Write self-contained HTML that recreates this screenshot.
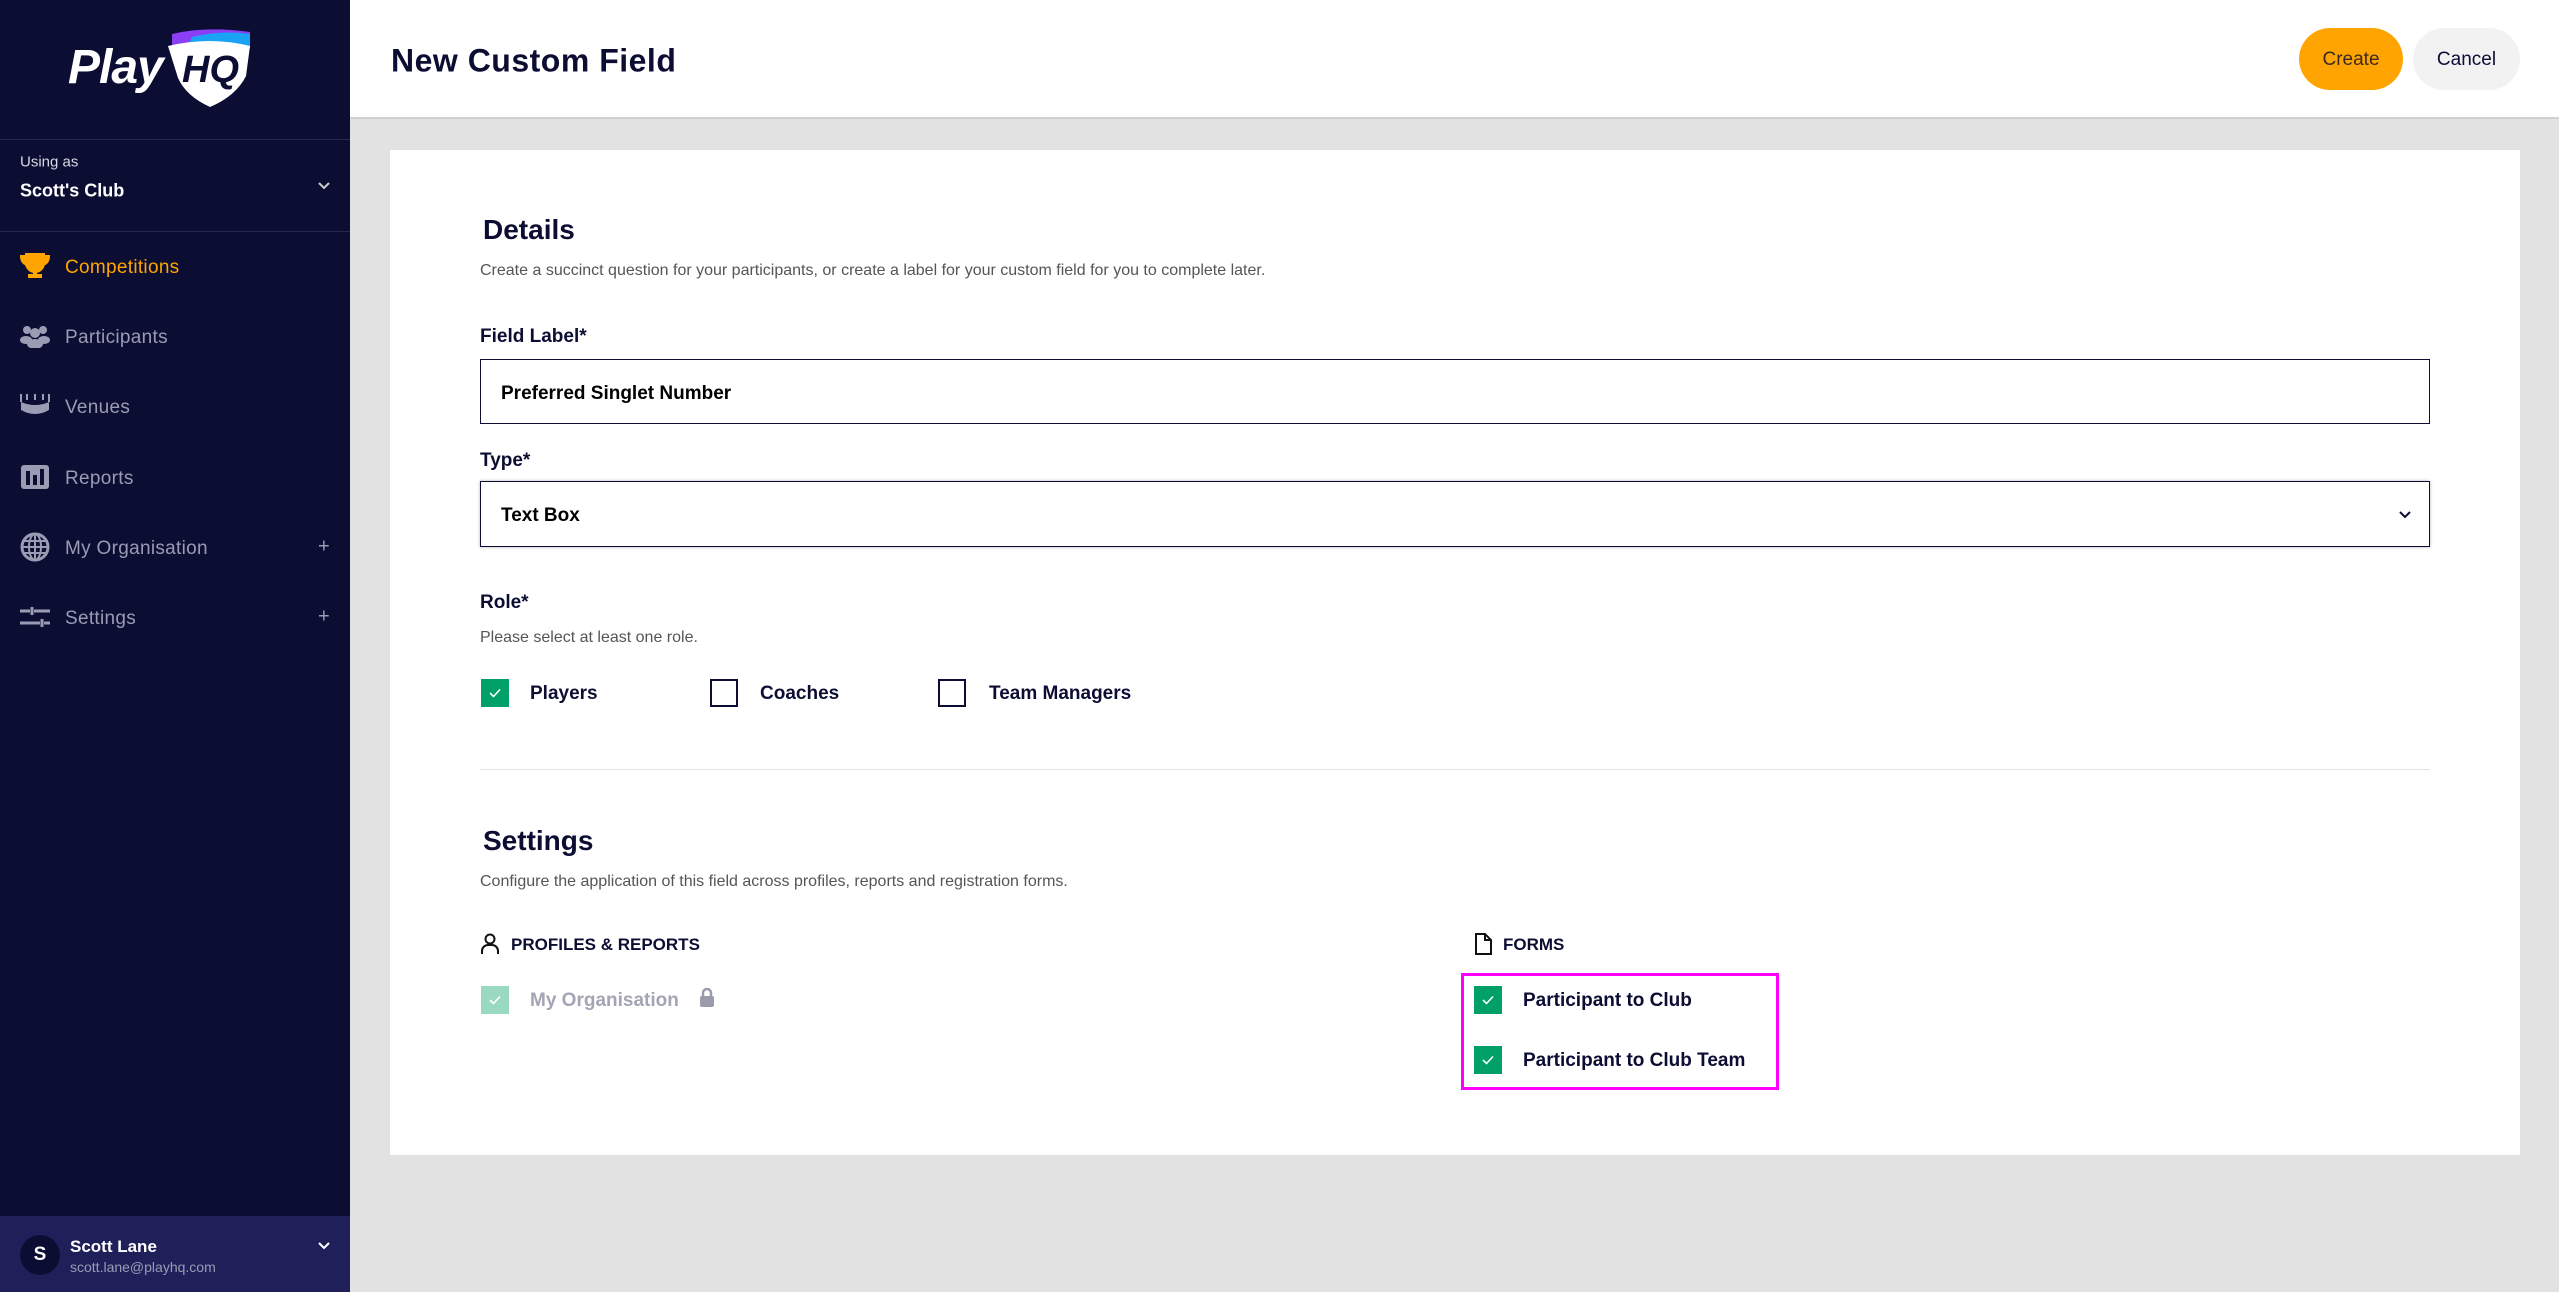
<!DOCTYPE html>
<html><head><meta charset="utf-8"><style>
*{box-sizing:border-box;margin:0;padding:0}
body{width:2559px;height:1292px;overflow:hidden;background:#e2e2e2;font-family:"Liberation Sans",sans-serif;color:#0b0d33;position:relative}
.a{position:absolute}
.sb{left:0;top:0;width:350px;height:1292px;background:#0b0d33}
.nav{left:65px;font-size:19px;color:#9a9cb4;transform:translateY(calc(-50% + 2px));letter-spacing:.3px}
.ic{left:20px;transform:translateY(-50%)}
.plus{left:318px;font-size:20px;color:#9a9cb4;transform:translateY(-50%)}
.t{transform:translateY(calc(-50% + 2px));white-space:nowrap}
.cb{width:28px;height:28px;border:2px solid #0b0d33;background:#fff}
.cbg{width:28px;height:28px;background:#00a067}
.cbg svg{position:absolute;left:8px;top:9px}
</style></head><body>
<div class="a sb"></div>
<!-- logo -->
<div class="a" style="left:68px;top:38px;font-size:48px;line-height:60px;font-weight:bold;font-style:italic;color:#fff;letter-spacing:-1px">Play</div>
<svg class="a" style="left:166px;top:26px" width="86" height="82" viewBox="0 0 86 82">
<path d="M6 8 Q40 0 84 6 L84 20 Q50 12 6 20Z" fill="#8b3ff5"/>
<path d="M26 11 Q56 4 84 8 L84 22 Q54 16 20 24Z" fill="#1aa3f5"/>
<path d="M2 20 Q44 10 84 20 L80 50 Q70 70 44 81 Q20 70 12 52Z" fill="#fff"/>
<text x="16" y="56" font-family="Liberation Sans" font-weight="bold" font-style="italic" font-size="38" fill="#0b0d33">HQ</text>
</svg>
<div class="a" style="left:0;top:139px;width:350px;height:1px;background:#25284d"></div>
<div class="a t" style="left:20px;top:160px;font-size:15px;color:#d8d8e4">Using as</div>
<div class="a t" style="left:20px;top:189px;font-size:18px;font-weight:bold;color:#fff">Scott's Club</div>
<svg class="a" style="left:318px;top:182px" width="12" height="8"><path d="M1 1l5 5 5-5" stroke="#ccc" stroke-width="2" fill="none"/></svg>
<div class="a" style="left:0;top:231px;width:350px;height:1px;background:#25284d"></div>
<!-- nav -->
<svg class="a ic" style="top:266px" width="30" height="26" viewBox="0 0 30 26"><path d="M6 1h18v9a9 9 0 0 1-18 0z M6 3H1q0 7 6 9 M24 3h5q0 7-6 9" fill="#ffa400" stroke="#ffa400" stroke-width="2"/><rect x="13" y="17" width="4" height="5" fill="#ffa400"/><rect x="8" y="21" width="14" height="4" fill="#ffa400"/></svg>
<div class="a nav" style="top:266px;color:#ffa400">Competitions</div>
<svg class="a ic" style="top:336px" width="30" height="24" viewBox="0 0 30 24"><circle cx="7" cy="6" r="4" fill="#9a9cb4"/><circle cx="23" cy="6" r="4" fill="#9a9cb4"/><circle cx="15" cy="9" r="5" fill="#9a9cb4"/><ellipse cx="6" cy="16" rx="6" ry="4" fill="#9a9cb4"/><ellipse cx="24" cy="16" rx="6" ry="4" fill="#9a9cb4"/><ellipse cx="15" cy="20" rx="8" ry="5" fill="#9a9cb4"/></svg>
<div class="a nav" style="top:336px">Participants</div>
<svg class="a ic" style="top:406px" width="30" height="24" viewBox="0 0 30 24"><path d="M1 0v8M7 0v6M15 0v6M23 0v6M29 0v8" stroke="#9a9cb4" stroke-width="2"/><path d="M1 8q14 6 28 0v8q-14 8-28 0z" fill="#9a9cb4"/></svg>
<div class="a nav" style="top:406px">Venues</div>
<svg class="a ic" style="top:477px" width="30" height="26" viewBox="0 0 30 26"><rect x="1" y="1" width="28" height="24" rx="3" fill="#9a9cb4"/><rect x="6" y="7" width="4" height="14" fill="#0b0d33"/><rect x="13" y="11" width="4" height="10" fill="#0b0d33"/><rect x="20" y="5" width="4" height="16" fill="#0b0d33"/></svg>
<div class="a nav" style="top:477px">Reports</div>
<svg class="a ic" style="top:547px" width="30" height="30" viewBox="0 0 30 30"><circle cx="15" cy="15" r="13" fill="none" stroke="#9a9cb4" stroke-width="3"/><ellipse cx="15" cy="15" rx="6" ry="13" fill="none" stroke="#9a9cb4" stroke-width="2"/><path d="M2 15h26M4 9h22M4 21h22M15 2v26" stroke="#9a9cb4" stroke-width="2"/></svg>
<div class="a nav" style="top:547px">My Organisation</div>
<div class="a plus" style="top:547px">+</div>
<svg class="a ic" style="top:617px" width="30" height="20" viewBox="0 0 30 20"><path d="M0 4h10M14 4h16M0 16h20M24 16h6" stroke="#9a9cb4" stroke-width="3"/><path d="M12 0v8M22 12v8" stroke="#9a9cb4" stroke-width="3"/></svg>
<div class="a nav" style="top:617px">Settings</div>
<div class="a plus" style="top:617px">+</div>
<!-- user -->
<div class="a" style="left:0;top:1216px;width:350px;height:76px;background:#1f2059"></div>
<div class="a" style="left:20px;top:1235px;width:40px;height:40px;border-radius:50%;background:#0b0d33;color:#fff;font-weight:bold;font-size:19px;text-align:center;line-height:40px">S</div>
<div class="a t" style="left:70px;top:1245px;font-size:17px;font-weight:bold;color:#fff">Scott Lane</div>
<div class="a t" style="left:70px;top:1265px;font-size:14px;color:#9a9cb4">scott.lane@playhq.com</div>
<svg class="a" style="left:318px;top:1242px" width="12" height="8"><path d="M1 1l5 5 5-5" stroke="#fff" stroke-width="2" fill="none"/></svg>
<!-- header -->
<div class="a" style="left:350px;top:0;width:2209px;height:119px;background:#fff;border-bottom:2px solid #d0d0d0"></div>
<div class="a t" style="left:391px;top:59px;font-size:32px;font-weight:bold;letter-spacing:.5px">New Custom Field</div>
<div class="a" style="left:2299px;top:28px;width:104px;height:62px;border-radius:31px;background:#ffa400;font-size:19px;text-align:center;line-height:64px;color:#3a2a20">Create</div>
<div class="a" style="left:2413px;top:28px;width:107px;height:62px;border-radius:31px;background:#f2f2f2;font-size:19px;text-align:center;line-height:64px">Cancel</div>
<!-- card -->
<div class="a" style="left:390px;top:150px;width:2130px;height:1005px;background:#fff"></div>
<div class="a t" style="left:483px;top:228px;font-size:28px;font-weight:bold">Details</div>
<div class="a t" style="left:480px;top:269px;font-size:16px;color:#555">Create a succinct question for your participants, or create a label for your custom field for you to complete later.</div>
<div class="a t" style="left:480px;top:335px;font-size:19px;font-weight:bold">Field Label*</div>
<div class="a" style="left:480px;top:359px;width:1950px;height:65px;border:1.5px solid #0b0d33"></div>
<div class="a t" style="left:501px;top:392px;font-size:19px;font-weight:bold;color:#000">Preferred Singlet Number</div>
<div class="a t" style="left:480px;top:459px;font-size:19px;font-weight:bold">Type*</div>
<div class="a" style="left:480px;top:481px;width:1950px;height:66px;border:1.5px solid #0b0d33;box-shadow:0 0 3px rgba(0,0,0,.3)"></div>
<div class="a t" style="left:501px;top:514px;font-size:19px;font-weight:bold;color:#000">Text Box</div>
<svg class="a" style="left:2399px;top:511px" width="12" height="8"><path d="M1 1l5 5 5-5" stroke="#0b0d33" stroke-width="2" fill="none"/></svg>
<div class="a t" style="left:480px;top:601px;font-size:19px;font-weight:bold">Role*</div>
<div class="a t" style="left:480px;top:636px;font-size:16px;color:#555">Please select at least one role.</div>
<div class="a cbg" style="left:481px;top:679px"><svg width="12" height="10"><path d="M1 5l3.5 3.5L11 1.5" stroke="#fff" stroke-width="1.6" fill="none"/></svg></div>
<div class="a t" style="left:530px;top:692px;font-size:19px;font-weight:bold">Players</div>
<div class="a cb" style="left:710px;top:679px"></div>
<div class="a t" style="left:760px;top:692px;font-size:19px;font-weight:bold">Coaches</div>
<div class="a cb" style="left:938px;top:679px"></div>
<div class="a t" style="left:989px;top:692px;font-size:19px;font-weight:bold">Team Managers</div>
<div class="a" style="left:480px;top:769px;width:1950px;height:1px;background:#e2e2e2"></div>
<div class="a t" style="left:483px;top:839px;font-size:28px;font-weight:bold">Settings</div>
<div class="a t" style="left:480px;top:880px;font-size:16px;color:#555">Configure the application of this field across profiles, reports and registration forms.</div>
<svg class="a" style="left:480px;top:933px" width="20" height="22" viewBox="0 0 20 22"><circle cx="10" cy="6" r="4.5" fill="none" stroke="#111" stroke-width="2"/><path d="M2 21v-3a6 6 0 0 1 6-6h4a6 6 0 0 1 6 6v3" fill="none" stroke="#111" stroke-width="2"/></svg>
<div class="a t" style="left:511px;top:943px;font-size:17px;font-weight:bold">PROFILES &amp; REPORTS</div>
<div class="a cbg" style="left:481px;top:986px;background:#98d9bf"><svg width="12" height="10"><path d="M1 5l3.5 3.5L11 1.5" stroke="#fff" stroke-width="1.6" fill="none"/></svg></div>
<div class="a t" style="left:530px;top:999px;font-size:19px;font-weight:bold;color:#a3a4b4">My Organisation</div>
<svg class="a" style="left:699px;top:987px" width="16" height="20" viewBox="0 0 16 20"><path d="M4 9V6a4 4 0 0 1 8 0v3" fill="none" stroke="#9a9cac" stroke-width="2.5"/><rect x="1" y="9" width="14" height="11" rx="2" fill="#9a9cac"/></svg>
<svg class="a" style="left:1474px;top:933px" width="18" height="22" viewBox="0 0 18 22"><path d="M2 1h9l6 6v14H2z M11 1v6h6" fill="none" stroke="#111" stroke-width="2"/></svg>
<div class="a t" style="left:1503px;top:943px;font-size:17px;font-weight:bold">FORMS</div>
<div class="a" style="left:1461px;top:973px;width:318px;height:117px;border:3px solid #ff00ff"></div>
<div class="a cbg" style="left:1474px;top:986px"><svg width="12" height="10"><path d="M1 5l3.5 3.5L11 1.5" stroke="#fff" stroke-width="1.6" fill="none"/></svg></div>
<div class="a t" style="left:1523px;top:999px;font-size:19px;font-weight:bold">Participant to Club</div>
<div class="a cbg" style="left:1474px;top:1046px"><svg width="12" height="10"><path d="M1 5l3.5 3.5L11 1.5" stroke="#fff" stroke-width="1.6" fill="none"/></svg></div>
<div class="a t" style="left:1523px;top:1059px;font-size:19px;font-weight:bold">Participant to Club Team</div>
</body></html>
